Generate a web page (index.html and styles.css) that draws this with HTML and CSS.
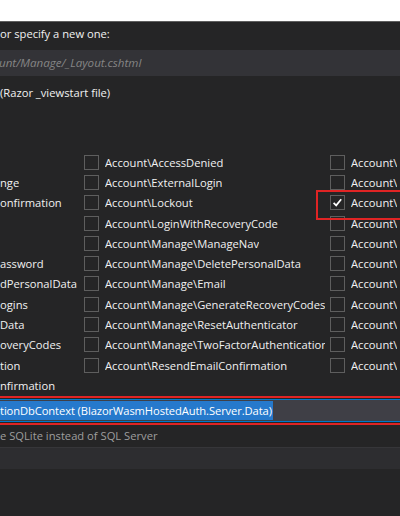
FILE: index.html
```html
<!DOCTYPE html>
<html>
<head>
  <title>Add Identity</title>
  <link rel="stylesheet" href="styles.css">
</head>
<body>
  <div class="titlebar"></div>

  <div class="dialog">
    <p class="prompt">or specify a new one:</p>
    <div class="layout-path">unt/Manage/_Layout.cshtml</div>
    <p class="hint">(Razor _viewstart file)</p>

    <div class="files">
      <div class="file"><span></span></div>
      <div class="file"><i class="check"></i><span>Account\AccessDenied</span></div>
      <div class="file"><i class="check"></i><span>Account\</span></div>

      <div class="file"><span>nge</span></div>
      <div class="file"><i class="check"></i><span>Account\ExternalLogin</span></div>
      <div class="file"><i class="check"></i><span>Account\</span></div>

      <div class="file"><span>onfirmation</span></div>
      <div class="file"><i class="check"></i><span>Account\Lockout</span></div>
      <div class="file marked"><i class="check">
        <svg width="13" height="13" viewBox="0 0 13 13"><path d="M2.6 6.8 L5.2 9.4 L10.2 3.2" fill="none" stroke="#ffffff" stroke-width="1.7"/></svg>
      </i><span>Account\</span></div>

      <div class="file"><span></span></div>
      <div class="file"><i class="check"></i><span>Account\LoginWithRecoveryCode</span></div>
      <div class="file"><i class="check"></i><span>Account\</span></div>

      <div class="file"><span></span></div>
      <div class="file"><i class="check"></i><span>Account\Manage\ManageNav</span></div>
      <div class="file"><i class="check"></i><span>Account\</span></div>

      <div class="file"><span>assword</span></div>
      <div class="file"><i class="check"></i><span>Account\Manage\DeletePersonalData</span></div>
      <div class="file"><i class="check"></i><span>Account\</span></div>

      <div class="file"><span>dPersonalData</span></div>
      <div class="file"><i class="check"></i><span>Account\Manage\Email</span></div>
      <div class="file"><i class="check"></i><span>Account\</span></div>

      <div class="file"><span>ogins</span></div>
      <div class="file"><i class="check"></i><span>Account\Manage\GenerateRecoveryCodes</span></div>
      <div class="file"><i class="check"></i><span>Account\</span></div>

      <div class="file"><span>Data</span></div>
      <div class="file"><i class="check"></i><span>Account\Manage\ResetAuthenticator</span></div>
      <div class="file"><i class="check"></i><span>Account\</span></div>

      <div class="file"><span>overyCodes</span></div>
      <div class="file"><i class="check"></i><span>Account\Manage\TwoFactorAuthentication</span></div>
      <div class="file"><i class="check"></i><span>Account\</span></div>

      <div class="file"><span>tion</span></div>
      <div class="file"><i class="check"></i><span>Account\ResendEmailConfirmation</span></div>
      <div class="file"><i class="check"></i><span>Account\</span></div>

      <div class="file"><span>nfirmation</span></div>
    </div>

    <div class="context">
      <div class="combo"><span class="selected">tionDbContext (BlazorWasmHostedAuth.Server.Data)</span></div>
    </div>

    <p class="sqlite">e SQLite instead of SQL Server</p>
    <div class="band"></div>
  </div>
</body>
</html>
```

FILE: styles.css
```css
* {
  box-sizing: border-box;
}

body {
  margin: 0;
  height: 516px;
  overflow: hidden;
  background-color: #252526;
  color: #f1f1f1;
  font-family: "Open Sans", "Noto Sans", sans-serif;
  font-size: 11.2px;
}

p {
  margin: 0;
}

.titlebar {
  height: 22px;
  background-color: white;
  border-bottom: 1px solid #5f5f5f;
}

.prompt {
  margin-top: 4px;
  line-height: 16px;
}

.layout-path {
  margin-top: 8px;
  height: 26px;
  line-height: 26px;
  background-color: #333337;
  color: #858585;
  font-style: italic;
  font-size: 11.6px;
  text-indent: -1px;
}

.hint {
  margin-top: 9px;
  line-height: 16px;
}

.files {
  margin-top: 51px;
  display: grid;
  grid-template-columns: 84px 246px 1fr;
  grid-auto-rows: 20.3px;
}

.file {
  display: flex;
  align-items: center;
  gap: 6px;
  padding-right: 5px;
  white-space: nowrap;
}

.file span {
  min-width: 0;
  overflow: hidden;
}

.check {
  flex: none;
  width: 15px;
  height: 15px;
  border: 1px solid #5e5e5e;
  display: flex;
  align-items: center;
  justify-content: center;
}

.marked {
  position: relative;
}

.marked::after {
  content: "";
  position: absolute;
  left: -14px;
  top: -3px;
  width: 120px;
  height: 26px;
  border: 2px solid #e02424;
}

.context {
  margin: 0 -10px;
  padding: 1px;
  border: 2px solid #e02424;
}

.combo {
  height: 23px;
  padding-left: 7px;
  display: flex;
  align-items: center;
  background-color: #3f3f46;
  border-top: 1px solid #007acc;
  border-bottom: 1px solid #007acc;
}

.selected {
  height: 19px;
  line-height: 19px;
  padding-right: 1px;
  background-color: #2679cc;
  color: white;
  letter-spacing: -0.1px;
}

.sqlite {
  height: 22px;
  line-height: 22px;
  color: #9e9e9e;
}

.band {
  height: 22px;
  background-color: #2d2d30;
  border-top: 1px solid #363639;
}
```
